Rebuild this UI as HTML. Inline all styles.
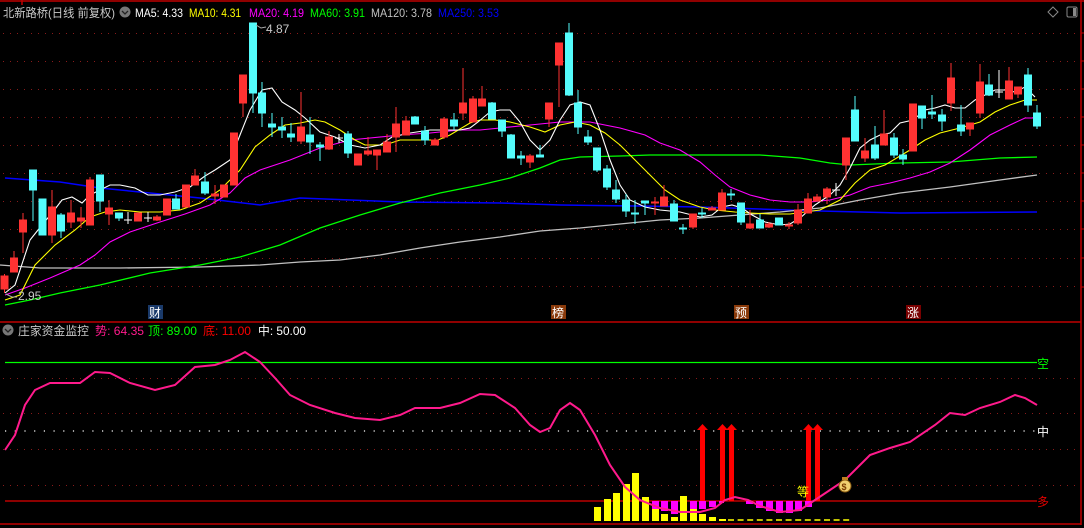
<!DOCTYPE html>
<html><head><meta charset="utf-8"><style>
html,body{margin:0;padding:0;background:#000;width:1084px;height:528px;overflow:hidden}
svg{display:block}
text{font-family:"Liberation Sans","Noto Sans CJK SC",sans-serif;font-size:12px}
</style></head><body>
<svg width="1084" height="528" viewBox="0 0 1084 528" xmlns="http://www.w3.org/2000/svg">
<rect width="1084" height="528" fill="#000"/>
<g stroke="#c00000" stroke-width="1.5" fill="none">
<line x1="0" y1="1" x2="1084" y2="1"/>
<line x1="1081" y1="0" x2="1081" y2="525"/>
<line x1="0" y1="322" x2="1081" y2="322"/>
<line x1="0" y1="524" x2="1081" y2="524"/>
<line x1="22" y1="0" x2="22" y2="5"/>
</g>
<g stroke="#c00000" stroke-width="1">
<line x1="1081" y1="33" x2="1084" y2="33"/><line x1="1081" y1="61" x2="1084" y2="61"/><line x1="1081" y1="89" x2="1084" y2="89"/><line x1="1081" y1="117" x2="1084" y2="117"/><line x1="1081" y1="145" x2="1084" y2="145"/><line x1="1081" y1="173" x2="1084" y2="173"/><line x1="1081" y1="201" x2="1084" y2="201"/><line x1="1081" y1="229" x2="1084" y2="229"/><line x1="1081" y1="258" x2="1084" y2="258"/><line x1="1081" y1="287" x2="1084" y2="287"/>
</g>
<g stroke="#8a1a1a" stroke-width="1" stroke-dasharray="1,6">
<line x1="3" y1="33.5" x2="1078" y2="33.5"/><line x1="3" y1="61.5" x2="1078" y2="61.5"/><line x1="3" y1="89.5" x2="1078" y2="89.5"/><line x1="3" y1="117.5" x2="1078" y2="117.5"/><line x1="3" y1="145.5" x2="1078" y2="145.5"/><line x1="3" y1="173.5" x2="1078" y2="173.5"/><line x1="3" y1="201.5" x2="1078" y2="201.5"/><line x1="3" y1="229.5" x2="1078" y2="229.5"/><line x1="3" y1="258.5" x2="1078" y2="258.5"/><line x1="3" y1="286.5" x2="1078" y2="286.5"/>
<line x1="3" y1="378.5" x2="1078" y2="378.5"/><line x1="3" y1="413.5" x2="1078" y2="413.5"/><line x1="3" y1="449.5" x2="1078" y2="449.5"/><line x1="3" y1="485.5" x2="1078" y2="485.5"/>
</g>
<text x="3" y="17" fill="#c8c8c8" textLength="112" lengthAdjust="spacingAndGlyphs">北新路桥(日线 前复权)</text>
<circle cx="125" cy="12" r="5.5" fill="#777"/><path d="M122 11 L125 14 L128 11" stroke="#222" stroke-width="1.3" fill="none"/>
<text x="135" y="17" fill="#fff" textLength="48" lengthAdjust="spacingAndGlyphs">MA5: 4.33</text>
<text x="189" y="17" fill="#ffff00" textLength="52" lengthAdjust="spacingAndGlyphs">MA10: 4.31</text>
<text x="249" y="17" fill="#ff00ff" textLength="55" lengthAdjust="spacingAndGlyphs">MA20: 4.19</text>
<text x="310" y="17" fill="#00ff00" textLength="55" lengthAdjust="spacingAndGlyphs">MA60: 3.91</text>
<text x="371" y="17" fill="#c0c0c0" textLength="61" lengthAdjust="spacingAndGlyphs">MA120: 3.78</text>
<text x="438" y="17" fill="#0000ff" textLength="61" lengthAdjust="spacingAndGlyphs">MA250: 3.53</text>
<path d="M1053 7 L1058 12 L1053 17 L1048 12 Z" stroke="#888" fill="none"/>
<rect x="1067" y="7" width="10" height="10" rx="1.5" stroke="#888" fill="none"/><rect x="1073" y="8" width="3" height="8" fill="#888"/>
<g fill="none" stroke-width="1.1">
<polyline stroke="#0000ff" stroke-width="1.5" points="5,178 60,182 100,188 150,193 200,198 260,205 300,198 400,202 500,203 560,205 640,206 700,207 760,209 820,211 900,213 1037,212"/>
<polyline stroke="#c0c0c0" stroke-width="1.3" points="0,265 40,268 120,268 200,267 260,265 300,262 340,260 380,255 420,248 460,242 500,237 540,231 580,228 620,224 660,220 700,218 740,215 780,212 820,208 860,200 900,193 950,187 1000,180 1037,175"/>
<polyline stroke="#00ff00" stroke-width="1.3" points="5,305 30,300 60,293 100,285 150,273 200,265 240,257 280,245 320,228 360,215 400,203 440,193 480,185 510,178 540,168 560,160 580,157 620,156 650,155 700,155 760,155 800,158 830,163 850,165 900,163 950,162 1000,158 1037,157"/>
<polyline stroke="#ff00ff" points="5,295 25,288 50,278 80,265 95,255 110,242 130,232 160,222 185,214 210,205 230,193 245,178 260,170 290,160 320,148 350,140 370,138 400,135 430,133 460,130 480,130 500,128 530,125 560,122 590,122 620,128 645,135 660,143 680,150 700,162 715,175 730,187 750,195 770,200 790,202 810,202 830,200 850,195 870,187 890,183 910,178 930,172 950,163 970,150 990,135 1010,125 1025,118 1037,118"/>
<polyline stroke="#ffff00" points="5,300 20,295 35,265 55,245 75,230 90,217 105,212 120,210 140,212 160,212 180,210 200,203 220,190 240,170 255,147 270,135 285,125 300,123 315,120 325,122 340,130 355,140 365,145 385,145 400,140 420,140 438,140 450,135 470,123 480,120 495,120 510,122 530,127 545,132 560,125 575,122 590,125 605,133 620,145 635,160 650,175 665,190 680,200 700,207 715,210 735,212 750,213 770,214 790,214 805,212 820,210 840,200 855,183 870,170 885,165 900,156 910,150 925,140 940,133 960,128 980,122 995,112 1010,105 1025,100 1037,100"/>
<polyline stroke="#ffffff" points="5,293 15,285 30,240 42,225 52,213 62,200 72,197 82,203 90,195 100,190 110,185 120,185 135,188 148,195 160,195 175,192 190,187 205,176 215,170 230,160 240,135 250,110 262,90 272,88 282,102 295,110 305,118 320,132 335,137 350,145 365,148 380,145 392,137 410,133 430,130 460,130 470,128 478,122 490,112 500,110 510,110 520,122 530,140 540,150 550,140 560,120 570,105 580,102 590,105 600,130 610,160 620,185 630,200 645,207 660,210 680,212 700,217 712,215 722,207 732,205 742,208 752,215 765,222 780,225 790,224 800,218 815,205 830,195 840,185 850,168 860,148 870,140 880,135 890,133 900,123 913,120 925,110 935,108 945,105 955,108 965,108 975,100 985,95 995,90 1005,90 1015,92 1025,87 1035,97"/>
</g>
<g shape-rendering="crispEdges" stroke-width="1">
<g fill="#ff3232" stroke="#ff3232">
<line x1="4.5" y1="274" x2="4.5" y2="293"/><rect x="1" y="276" width="7" height="13"/>
<line x1="14" y1="251" x2="14" y2="272"/><rect x="10.5" y="258" width="7" height="14"/>
<line x1="23" y1="213" x2="23" y2="253"/><rect x="19.5" y="220" width="7" height="12"/>
<line x1="52" y1="190" x2="52" y2="243"/><rect x="48.5" y="207" width="7" height="28"/>
<line x1="71" y1="200" x2="71" y2="228"/><rect x="67.5" y="213" width="7" height="9"/>
<line x1="81" y1="207" x2="81" y2="228"/><rect x="77.5" y="218" width="7" height="3"/>
<line x1="90" y1="177" x2="90" y2="225"/><rect x="86.5" y="180" width="7" height="45"/>
<line x1="109" y1="200" x2="109" y2="225"/><rect x="105.5" y="208" width="7" height="6"/>
<rect x="134.5" y="213" width="7" height="8"/>
<line x1="157" y1="215" x2="157" y2="221"/><rect x="153.5" y="217" width="7" height="3"/>
<rect x="163.5" y="199" width="7" height="16"/>
<rect x="182.5" y="185" width="7" height="22"/>
<line x1="195" y1="169" x2="195" y2="185"/><rect x="191.5" y="176" width="7" height="9"/>
<line x1="215" y1="185" x2="215" y2="204"/><rect x="211.5" y="194" width="7" height="2"/>
<rect x="220.5" y="185" width="7" height="12"/>
<rect x="230.5" y="133" width="7" height="52"/>
<line x1="243" y1="75" x2="243" y2="117"/><rect x="239.5" y="75" width="7" height="28"/>
<line x1="301" y1="92" x2="301" y2="144"/><rect x="297.5" y="127" width="7" height="14"/>
<line x1="329" y1="131" x2="329" y2="150"/><rect x="325.5" y="137" width="7" height="12"/>
<rect x="354.5" y="154" width="7" height="11"/>
<line x1="368" y1="137" x2="368" y2="156"/><rect x="364.5" y="151" width="7" height="3"/>
<line x1="377" y1="150" x2="377" y2="170"/><rect x="373.5" y="150" width="7" height="5"/>
<line x1="387" y1="134" x2="387" y2="152"/><rect x="383.5" y="142" width="7" height="10"/>
<line x1="396" y1="107" x2="396" y2="152"/><rect x="392.5" y="124" width="7" height="13"/>
<line x1="406" y1="116" x2="406" y2="135"/><rect x="402.5" y="121" width="7" height="14"/>
<line x1="435" y1="138" x2="435" y2="145"/><rect x="431.5" y="140" width="7" height="5"/>
<line x1="444" y1="117" x2="444" y2="139"/><rect x="440.5" y="119" width="7" height="18"/>
<line x1="463" y1="68" x2="463" y2="120"/><rect x="459.5" y="103" width="7" height="10"/>
<line x1="473" y1="96" x2="473" y2="122"/><rect x="469.5" y="99" width="7" height="23"/>
<line x1="482" y1="86" x2="482" y2="106"/><rect x="478.5" y="99" width="7" height="7"/>
<line x1="530" y1="154" x2="530" y2="168"/><rect x="526.5" y="156" width="7" height="6"/>
<line x1="549" y1="103" x2="549" y2="127"/><rect x="545.5" y="103" width="7" height="16"/>
<line x1="559" y1="43" x2="559" y2="107"/><rect x="555.5" y="43" width="7" height="22"/>
<line x1="655" y1="197" x2="655" y2="215"/><rect x="651.5" y="202" width="7" height="1"/>
<line x1="664" y1="185" x2="664" y2="206"/><rect x="660.5" y="197" width="7" height="9"/>
<line x1="693" y1="214" x2="693" y2="229"/><rect x="689.5" y="214" width="7" height="13"/>
<line x1="712" y1="206" x2="712" y2="210"/><rect x="708.5" y="208" width="7" height="2"/>
<line x1="722" y1="189" x2="722" y2="210"/><rect x="718.5" y="193" width="7" height="17"/>
<line x1="750" y1="210" x2="750" y2="229"/><rect x="746.5" y="224" width="7" height="4"/>
<line x1="769" y1="222" x2="769" y2="228"/><rect x="765.5" y="224" width="7" height="3"/>
<line x1="789" y1="222" x2="789" y2="229"/><rect x="785.5" y="225" width="7" height="1"/>
<line x1="798" y1="204" x2="798" y2="225"/><rect x="794.5" y="210" width="7" height="13"/>
<line x1="808" y1="193" x2="808" y2="213"/><rect x="804.5" y="199" width="7" height="14"/>
<line x1="817" y1="194" x2="817" y2="201"/><rect x="813.5" y="197" width="7" height="4"/>
<line x1="827" y1="187" x2="827" y2="204"/><rect x="823.5" y="189" width="7" height="8"/>
<line x1="846" y1="138" x2="846" y2="180"/><rect x="842.5" y="138" width="7" height="27"/>
<line x1="865" y1="138" x2="865" y2="162"/><rect x="861.5" y="151" width="7" height="7"/>
<line x1="884" y1="110" x2="884" y2="145"/><rect x="880.5" y="134" width="7" height="11"/>
<rect x="909.5" y="104" width="7" height="47"/>
<line x1="951" y1="63" x2="951" y2="111"/><rect x="947.5" y="78" width="7" height="25"/>
<line x1="970" y1="123" x2="970" y2="136"/><rect x="966.5" y="123" width="7" height="6"/>
<line x1="980" y1="64" x2="980" y2="118"/><rect x="976.5" y="82" width="7" height="31"/>
<line x1="1009" y1="67" x2="1009" y2="99"/><rect x="1005.5" y="81" width="7" height="18"/>
<line x1="1018" y1="87" x2="1018" y2="98"/><rect x="1014.5" y="87" width="7" height="7"/>
</g>
<g fill="#54fcfc" stroke="#54fcfc">
<line x1="33" y1="170" x2="33" y2="221"/><rect x="29.5" y="170" width="7" height="20"/>
<rect x="39" y="199" width="7" height="36"/>
<line x1="61" y1="213" x2="61" y2="238"/><rect x="57.5" y="215" width="7" height="16"/>
<line x1="100" y1="175" x2="100" y2="212"/><rect x="96.5" y="175" width="7" height="26"/>
<line x1="119" y1="213" x2="119" y2="221"/><rect x="115.5" y="213" width="7" height="5"/>
<line x1="176" y1="194" x2="176" y2="209"/><rect x="172.5" y="199" width="7" height="10"/>
<line x1="205" y1="172" x2="205" y2="195"/><rect x="201.5" y="182" width="7" height="11"/>
<line x1="253" y1="23" x2="253" y2="113"/><rect x="249.5" y="23" width="7" height="70"/>
<line x1="262" y1="82" x2="262" y2="127"/><rect x="258.5" y="93" width="7" height="20"/>
<line x1="272" y1="113" x2="272" y2="137"/><rect x="268.5" y="124" width="7" height="3"/>
<line x1="282" y1="117" x2="282" y2="138"/><rect x="278.5" y="127" width="7" height="3"/>
<line x1="291" y1="123" x2="291" y2="142"/><rect x="287.5" y="134" width="7" height="3"/>
<line x1="310" y1="117" x2="310" y2="154"/><rect x="306.5" y="135" width="7" height="7"/>
<line x1="320" y1="142" x2="320" y2="161"/><rect x="316.5" y="145" width="7" height="2"/>
<line x1="348" y1="131" x2="348" y2="158"/><rect x="344.5" y="134" width="7" height="19"/>
<line x1="415" y1="116" x2="415" y2="124"/><rect x="411.5" y="117" width="7" height="7"/>
<line x1="425" y1="126" x2="425" y2="145"/><rect x="421.5" y="131" width="7" height="9"/>
<line x1="454" y1="113" x2="454" y2="130"/><rect x="450.5" y="120" width="7" height="6"/>
<line x1="492" y1="102" x2="492" y2="119"/><rect x="488.5" y="103" width="7" height="16"/>
<line x1="502" y1="120" x2="502" y2="137"/><rect x="498.5" y="120" width="7" height="11"/>
<line x1="511" y1="134" x2="511" y2="158"/><rect x="507.5" y="135" width="7" height="23"/>
<line x1="521" y1="151" x2="521" y2="165"/><rect x="517.5" y="156" width="7" height="2"/>
<line x1="540" y1="145" x2="540" y2="157"/><rect x="536.5" y="155" width="7" height="2"/>
<line x1="569" y1="23" x2="569" y2="96"/><rect x="565.5" y="33" width="7" height="62"/>
<line x1="578" y1="90" x2="578" y2="134"/><rect x="574.5" y="103" width="7" height="24"/>
<line x1="588" y1="130" x2="588" y2="145"/><rect x="584.5" y="137" width="7" height="5"/>
<line x1="597" y1="148" x2="597" y2="172"/><rect x="593.5" y="148" width="7" height="22"/>
<line x1="607" y1="165" x2="607" y2="190"/><rect x="603.5" y="169" width="7" height="18"/>
<line x1="616" y1="180" x2="616" y2="203"/><rect x="612.5" y="190" width="7" height="9"/>
<line x1="626" y1="194" x2="626" y2="217"/><rect x="622.5" y="200" width="7" height="11"/>
<line x1="635" y1="200" x2="635" y2="224"/><rect x="631.5" y="213" width="7" height="1"/>
<line x1="645" y1="201" x2="645" y2="215"/><rect x="641.5" y="201" width="7" height="2"/>
<line x1="674" y1="200" x2="674" y2="221"/><rect x="670.5" y="204" width="7" height="17"/>
<line x1="683" y1="224" x2="683" y2="234"/><rect x="679.5" y="228" width="7" height="1"/>
<line x1="702" y1="208" x2="702" y2="218"/><rect x="698.5" y="213" width="7" height="1"/>
<line x1="731" y1="189" x2="731" y2="200"/><rect x="727.5" y="194" width="7" height="1"/>
<line x1="741" y1="203" x2="741" y2="225"/><rect x="737.5" y="203" width="7" height="19"/>
<line x1="760" y1="214" x2="760" y2="228"/><rect x="756.5" y="220" width="7" height="8"/>
<rect x="775.5" y="218" width="7" height="7"/>
<line x1="855" y1="96" x2="855" y2="141"/><rect x="851.5" y="110" width="7" height="31"/>
<line x1="875" y1="126" x2="875" y2="160"/><rect x="871.5" y="145" width="7" height="13"/>
<line x1="894" y1="133" x2="894" y2="158"/><rect x="890.5" y="138" width="7" height="17"/>
<line x1="903" y1="149" x2="903" y2="165"/><rect x="899.5" y="155" width="7" height="4"/>
<line x1="922" y1="106" x2="922" y2="129"/><rect x="918.5" y="106" width="7" height="12"/>
<line x1="932" y1="95" x2="932" y2="119"/><rect x="928.5" y="112" width="7" height="2"/>
<line x1="942" y1="109" x2="942" y2="131"/><rect x="938.5" y="115" width="7" height="6"/>
<line x1="961" y1="105" x2="961" y2="136"/><rect x="957.5" y="125" width="7" height="6"/>
<line x1="989" y1="74" x2="989" y2="96"/><rect x="985.5" y="85" width="7" height="10"/>
<line x1="1028" y1="68" x2="1028" y2="112"/><rect x="1024.5" y="75" width="7" height="30"/>
<line x1="1037" y1="105" x2="1037" y2="129"/><rect x="1033.5" y="113" width="7" height="13"/>
</g>
<g stroke="#fff" fill="#fff">
<line x1="128" y1="212" x2="128" y2="224"/><line x1="124" y1="220" x2="132" y2="220"/>
<line x1="148" y1="212" x2="148" y2="222"/><line x1="144" y1="218" x2="152" y2="218"/>
<line x1="339" y1="134" x2="339" y2="143"/><line x1="335" y1="138" x2="343" y2="138"/>
<line x1="836" y1="183" x2="836" y2="196"/><line x1="832" y1="190" x2="840" y2="190"/>
<line x1="999" y1="70" x2="999" y2="98"/><line x1="995" y1="92" x2="1003" y2="92"/>
</g>
</g>
<path d="M256 25 L261 28 L266 27" stroke="#aaa" fill="none"/>
<text x="266" y="33" fill="#c8c8c8">4.87</text>
<path d="M6 294 L12 297 L17 297" stroke="#aaa" fill="none"/>
<text x="18" y="300" fill="#c8c8c8">2.95</text>
<rect x="148" y="305" width="15" height="14" fill="#1a3a6a"/><text x="149" y="317" fill="#fff">财</text>
<rect x="551" y="305" width="15" height="14" fill="#8a3a0a"/><text x="552" y="317" fill="#fff">榜</text>
<rect x="734" y="305" width="15" height="14" fill="#8a3a0a"/><text x="735" y="317" fill="#fff">预</text>
<rect x="906" y="305" width="15" height="14" fill="#7a0000"/><text x="907" y="317" fill="#fff">涨</text>
<circle cx="8" cy="330" r="5.5" fill="#777"/><path d="M5 329 L8 332 L11 329" stroke="#222" stroke-width="1.3" fill="none"/>
<text x="18" y="335" fill="#c8c8c8" textLength="71" lengthAdjust="spacingAndGlyphs">庄家资金监控</text>
<text x="95" y="335" fill="#ff1a8c" textLength="49" lengthAdjust="spacingAndGlyphs">势: 64.35</text>
<text x="148" y="335" fill="#00ff00" textLength="49" lengthAdjust="spacingAndGlyphs">顶: 89.00</text>
<text x="203" y="335" fill="#ff0000" textLength="48" lengthAdjust="spacingAndGlyphs">底: 11.00</text>
<text x="258" y="335" fill="#fff" textLength="48" lengthAdjust="spacingAndGlyphs">中: 50.00</text>
<line x1="5" y1="362.5" x2="1037" y2="362.5" stroke="#00ff00" stroke-width="1.2"/>
<text x="1037" y="368" fill="#00ff00">空</text>
<line x1="5" y1="431" x2="1037" y2="431" stroke="#fff" stroke-width="1.2" stroke-dasharray="1.2,8.5"/>
<text x="1037" y="436" fill="#fff">中</text>
<line x1="5" y1="501" x2="1037" y2="501" stroke="#e00000" stroke-width="1.2"/>
<text x="1037" y="506" fill="#e00000">多</text>
<g fill="#ffff00" shape-rendering="crispEdges">
<rect x="594" y="507" width="7" height="14"/><rect x="604" y="499" width="7" height="22"/><rect x="613" y="493" width="7" height="28"/><rect x="623" y="484" width="7" height="37"/><rect x="632" y="473" width="7" height="48"/><rect x="642" y="497" width="7" height="24"/><rect x="652" y="509" width="7" height="12"/><rect x="661" y="514" width="7" height="7"/><rect x="671" y="517" width="7" height="4"/><rect x="680" y="496" width="7" height="25"/><rect x="690" y="508" width="7" height="13"/><rect x="699" y="514" width="7" height="7"/><rect x="709" y="517" width="7" height="4"/><rect x="719" y="519" width="7" height="2"/>
</g>
<line x1="728" y1="520" x2="852" y2="520" stroke="#ffff00" stroke-width="1.5" stroke-dasharray="6,3.6"/>
<g fill="#ff00ff" shape-rendering="crispEdges">
<rect x="652" y="501" width="7" height="8"/><rect x="661" y="501" width="7" height="10"/><rect x="671" y="501" width="7" height="13"/><rect x="690" y="501" width="7" height="8"/><rect x="699" y="501" width="7" height="8"/><rect x="709" y="501" width="7" height="6"/><rect x="719" y="501" width="5" height="2"/>
<rect x="746" y="501" width="7" height="3"/><rect x="756" y="501" width="7" height="7"/><rect x="766" y="501" width="7" height="10"/><rect x="776" y="501" width="7" height="12"/><rect x="786" y="501" width="7" height="12"/><rect x="795" y="501" width="7" height="10"/><rect x="805" y="501" width="7" height="6"/>
</g>
<g fill="#ff0000">
<rect x="700" y="429" width="5" height="72"/><path d="M697 430 L702.5 424 L708 430 Z"/>
<rect x="720" y="429" width="5" height="72"/><path d="M717 430 L722.5 424 L728 430 Z"/>
<rect x="729" y="429" width="5" height="72"/><path d="M726 430 L731.5 424 L737 430 Z"/>
<rect x="806" y="429" width="5" height="72"/><path d="M803 430 L808.5 424 L814 430 Z"/>
<rect x="815" y="429" width="5" height="72"/><path d="M812 430 L817.5 424 L823 430 Z"/>
</g>
<polyline fill="none" stroke="#ff1a8c" stroke-width="2" points="5,450 15,435 25,405 35,390 50,383 80,383 95,372 110,373 130,383 155,390 175,385 195,367 215,365 230,360 245,352 260,362 275,378 290,395 310,405 335,413 355,418 380,420 400,415 415,408 440,408 460,403 480,394 495,395 515,408 530,425 540,432 550,428 560,410 570,403 580,410 595,435 610,465 625,487 640,500 660,508 680,512 700,512 715,508 725,500 735,497 748,500 760,506 780,512 800,510 815,500 830,490 845,480 860,465 870,455 890,448 910,442 935,425 950,413 965,415 980,408 1000,402 1015,395 1025,398 1037,405"/>
<text x="797" y="496" fill="#ffff00">等</text>
<ellipse cx="845" cy="486" rx="6" ry="6" fill="#f0d070" stroke="#8a5a10"/>
<rect x="842" y="477" width="6" height="3" fill="#c08020"/>
<text x="841.5" y="490" fill="#7a3a00" style="font-size:9px;font-weight:bold">$</text>
</svg>
</body></html>
